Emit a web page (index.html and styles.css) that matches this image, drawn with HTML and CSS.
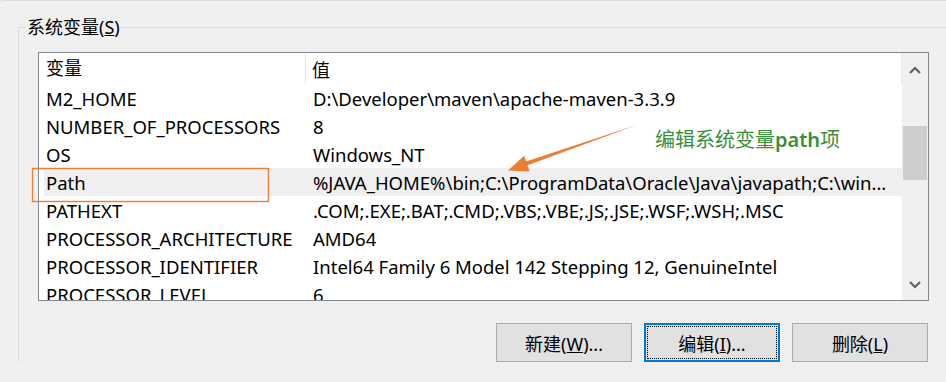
FILE: index.html
```html
<!DOCTYPE html>
<html lang="zh-CN">
<head>
  <meta charset="UTF-8" />
  <title>系统变量</title>
  <link rel="stylesheet" href="styles.css">
</head>
<body>

  <div class="upper-box"></div>

  <fieldset class="group">
    <legend>系统变量(<u>S</u>)</legend>

    <div class="listbox">
      <div class="list">
        <div class="list-head">
          <div class="col-name">变量</div>
          <div class="col-value">值</div>
        </div>
        <div class="row">
          <div class="col-name">M2_HOME</div>
          <div class="col-value">D:\Developer\maven\apache-maven-3.3.9</div>
        </div>
        <div class="row">
          <div class="col-name">NUMBER_OF_PROCESSORS</div>
          <div class="col-value">8</div>
        </div>
        <div class="row">
          <div class="col-name">OS</div>
          <div class="col-value">Windows_NT</div>
        </div>
        <div class="row selected">
          <div class="col-name">Path</div>
          <div class="col-value">%JAVA_HOME%\bin;C:\ProgramData\Oracle\Java\javapath;C:\win...</div>
        </div>
        <div class="row">
          <div class="col-name">PATHEXT</div>
          <div class="col-value">.COM;.EXE;.BAT;.CMD;.VBS;.VBE;.JS;.JSE;.WSF;.WSH;.MSC</div>
        </div>
        <div class="row">
          <div class="col-name">PROCESSOR_ARCHITECTURE</div>
          <div class="col-value">AMD64</div>
        </div>
        <div class="row">
          <div class="col-name">PROCESSOR_IDENTIFIER</div>
          <div class="col-value">Intel64 Family 6 Model 142 Stepping 12, GenuineIntel</div>
        </div>
        <div class="row">
          <div class="col-name">PROCESSOR_LEVEL</div>
          <div class="col-value">6</div>
        </div>
      </div>

      <div class="scrollbar">
        <svg class="arrow-btn" width="26" height="30" viewBox="0 0 26 30">
          <path d="M8 20 L13 15 L18 20" fill="none" stroke="#606060" stroke-width="2.2" />
        </svg>
        <div class="track">
          <div class="thumb"></div>
        </div>
        <svg class="arrow-btn" width="26" height="30" viewBox="0 0 26 30">
          <path d="M8 12 L13 17 L18 12" fill="none" stroke="#606060" stroke-width="2.2" />
        </svg>
      </div>

      <div class="note">编辑系统变量<b>path</b>项</div>
    </div>

    <div class="buttons">
      <button>新建(<u>W</u>)...</button>
      <button class="focused">编辑(<u>I</u>)...</button>
      <button>删除(<u>L</u>)</button>
    </div>
  </fieldset>

  <!-- annotation drawn over the screenshot -->
  <svg class="marks" width="946" height="382" viewBox="0 0 946 382">
    <rect x="32.5" y="168.5" width="236" height="33" fill="none" stroke="#ed7d31" stroke-width="1.4" />
    <polygon points="638,124.5 527.6,165.3 529.5,171.5 508,170.5 524.3,155.8 526.2,161.5" fill="#ed7d31" />
  </svg>

</body>
</html>
```

FILE: styles.css
```css
body {
  margin: 0;
  width: 946px;
  height: 382px;
  overflow: hidden;
  background: #f0f0f0;
  font-family: 'Noto Sans', 'Noto Sans CJK SC', sans-serif;
  font-size: 18.5px;
  color: #000;
  position: relative;
}

.upper-box {
  height: 2px;
  margin-left: 1px;
  border-top: 1px solid #dcdcdc;
  border-left: 1px solid #dcdcdc;
}

.group {
  margin: 13px 0 0 18px;
  padding: 0 0 0 19px;
  border: none;
  border-top: 1px solid #dcdcdc;
  border-left: 1px solid #dcdcdc;
  min-width: 0;
}

.group legend {
  margin-left: -12px;
  padding: 0 1px;
  font-size: 18px;
  line-height: 22px;
}

.listbox {
  position: relative;
  margin-top: 14px;
  width: 889px;
  height: 247px;
  border: 1px solid #828790;
  background: #fff;
  display: flex;
  overflow: hidden;
}

.list {
  width: 863px;
  overflow: hidden;
}

.list-head {
  display: flex;
  height: 31px;
  align-items: center;
  border-right: 1px solid #e5e5e5;
}

.list-head .col-name {
  border-right: 1px solid #e5e5e5;
  height: 29px;
  line-height: 29px;
}

.list-head .col-value {
  font-size: 18px;
}

.row {
  display: flex;
  height: 28px;
  align-items: center;
  margin-left: 5px;
  white-space: nowrap;
}

.row.selected {
  background: #efefef;
}

.col-name {
  width: 259px;
  padding-left: 7px;
  flex-shrink: 0;
  font-size: 18px;
}

.row .col-name {
  width: 261px;
  padding-left: 2px;
  font-size: 18.5px;
}

.col-value {
  padding-left: 6px;
  overflow: hidden;
  white-space: nowrap;
}

.scrollbar {
  width: 26px;
  background: #f0f0f0;
  display: flex;
  flex-direction: column;
}

.arrow-btn {
  display: block;
}

.track {
  flex: 1;
  padding: 43px 1px 0;
}

.thumb {
  height: 54px;
  background: #cdcdcd;
}

.note {
  position: absolute;
  left: 616px;
  top: 71px;
  color: #3a8f3a;
  font-family: 'Noto Sans CJK SC', sans-serif;
  font-size: 20px;
  white-space: nowrap;
}

.note b {
  font-family: 'Noto Sans', sans-serif;
  font-weight: 600;
}

.buttons {
  display: flex;
  justify-content: flex-end;
  gap: 12px;
  width: 890px;
  margin-top: 22px;
}

.buttons button {
  width: 136px;
  height: 39px;
  background: #e1e1e1;
  border: 1px solid #adadad;
  font-family: 'Noto Sans', 'Noto Sans CJK SC', sans-serif;
  font-size: 18px;
  color: #000;
  padding: 0;
}

.buttons button.focused {
  border: 2px solid #0078d7;
  outline: 1px dotted #000;
  outline-offset: -4px;
}

.marks {
  position: absolute;
  left: 0;
  top: 0;
  pointer-events: none;
}
```
